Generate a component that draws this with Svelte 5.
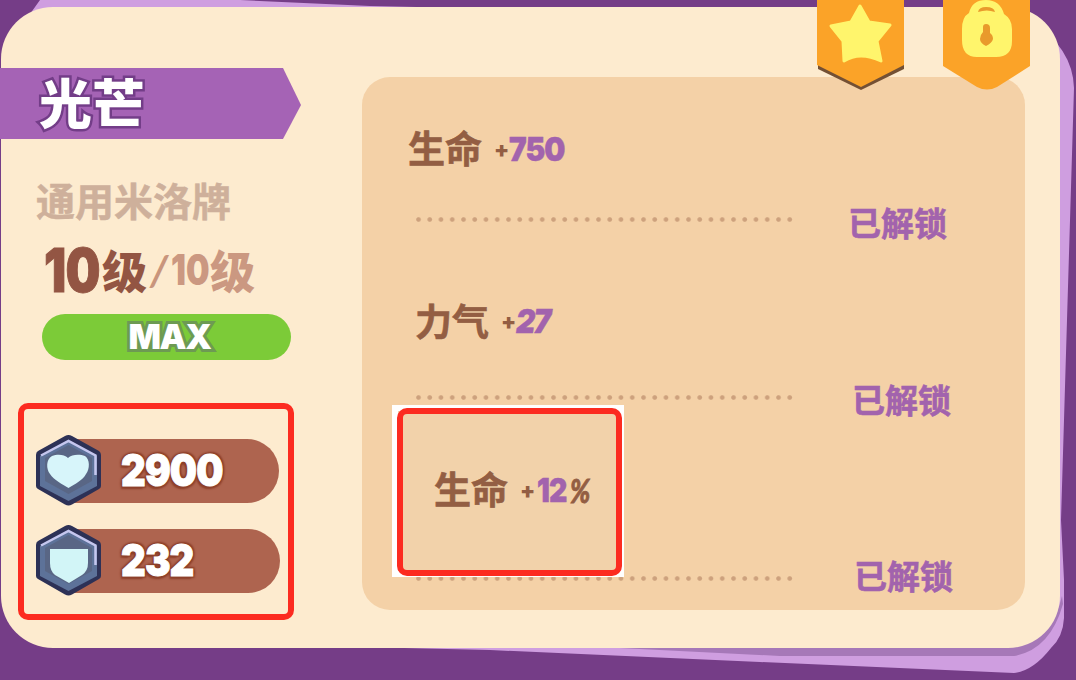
<script>
    const stats = [
        {icon: "heart", value: 2900, width: 210},
        {icon: "shield", value: 232, width: 211}
    ];

    const bonuses = [
        {name: "生命", value: "750", unit: "", style: "first"},
        {name: "力气", value: "27", unit: "", style: "second"},
        {name: "生命", value: "12", unit: "%", style: "third"}
    ];
</script>

<div class="screen">
    <svg class="backdrop" width="1076" height="680" viewBox="0 0 1076 680">
        <path fill="#cf9ee0" d="M20 28 L40 0 H240 L370 6 L1030 20 Q1073 48 1074 88 L1067 320 L1061 520 L1064 580 L1064 618 Q1063 637 1051 648 Q1033 671 1014 673 L760 662 L490 650 L60 640Z"/>
        <path fill="#a678b8" d="M560 645 H1010 Q1052 640 1062 596 L1063 604 Q1050 650 1014 656 H780Z"/>
    </svg>

    <main class="card">
        <section class="summary">
            <h1 class="ribbon"><span>光芒</span></h1>
            <p class="kind">通用米洛牌</p>

            <div class="level">
                <b class="now">10</b><span class="unit">级</span><i>/</i><b class="cap">10</b><span class="unit faded">级</span>
            </div>

            <div class="progress">MAX</div>

            <div class="stats">
                {#each stats as stat}
                    <div class="stat">
                        <svg width="67" height="72" viewBox="0 0 67 72">
                            <path fill="#2d3156" d="M30 1 Q33.5 -1 37 1 L64 16 Q66 17.500 66 20 V51 Q66 53 64 54 L37 69.500 Q33.5 71.500 30 69.500 L3 54 Q1 53 1 51 V20 Q1 17 3 16Z"/>
                            <path fill="#5d7299" d="M33.500 5 L62 21 V51 L33.500 66 L5 51 V21Z"/>
                            <path fill="#596685" d="M33.500 10 L57 23 V46 L33.500 59 L10 46 V23Z"/>
                            <path fill="none" stroke="#c5c7ef" stroke-width="2.500" d="M6 20.500 L33.500 6 L60.500 20.500 V40"/>
                            {#if stat.icon === "heart"}
                                <path fill="#d7f5fa" d="M33 23 C29 19 22 19 17 21 C11 24 11 34 15 39 C19 45 27 49 33.500 53 C40 49 48 45 51 39 C55 34 55 24 50 21 C45 19 37 19 33 23Z"/>
                            {:else}
                                <path fill="#d2f5f7" d="M15 24 H53 V38 Q53 46 47 50 L34 58 L20 50 Q15 46 15 38Z"/>
                            {/if}
                        </svg>
                        <div class="bar" style:width="{stat.width}px"><b>{stat.value}</b></div>
                    </div>
                {/each}
            </div>
        </section>

        <section class="bonuses">
            {#each bonuses as bonus}
                <div class="bonus {bonus.style}">
                    <div class="detail">
                        <div class="text">
                            <span class="name">{bonus.name}</span>
                            <span class="amount"><i>+</i><b>{bonus.value}</b>{#if bonus.unit}<em>{bonus.unit}</em>{/if}</span>
                        </div>
                        <div class="dots"></div>
                    </div>
                    <span class="state">已解锁</span>
                </div>
            {/each}
        </section>
    </main>

    <div class="badges">
        <svg width="88" height="92" viewBox="0 0 88 92">
            <path fill="#735034" d="M1 62 H87 V69 L44 90 L1 69Z"/>
            <path fill="#fba328" d="M0 0 H87 V65 L44 87 L0 65Z"/>
            <path fill="#fff56c" stroke="#fff56c" stroke-width="3" stroke-linejoin="round" d="M43 6 L52 22 L73 25 L60 41 L64 61 Q43 51 27 61 L26 41 L14 26 L34 22Z"/>
        </svg>
        <svg width="88" height="92" viewBox="0 0 88 92">
            <path fill="#fba328" d="M0 0 H87 V66 L54 87 Q44 92 34 87 L0 66Z"/>
            <path fill="#fff56c" d="M26 13 Q29 0 43 0 Q57 0 61 14 Q69 19 69 29 V41 Q69 57 53 57 H34 Q19 57 19 40 V29 Q19 17 26 13Z"/>
            <path fill="#e99a2c" d="M35 12 Q36 7 43 7 Q51 7 52 12 Q44 9 35 12Z M40 27 Q40 24 43 24 Q47 24 47 28 V33 Q50 35 50 39 Q49 43 43 46 Q37 43 37 39 Q37 35 40 32Z"/>
        </svg>
    </div>

    <div class="highlight"></div>
</div>

<style>
    :global(body){
        margin: 0;
    }

    .screen{
        position: relative;
        display: flow-root;
        width: 1076px;
        height: 680px;
        overflow: hidden;
        background: #753d87;
        font-family: "Noto Sans CJK SC", sans-serif;
    }

    .backdrop{
        position: absolute;
        top: 0;
        left: 0;
    }

    .card{
        position: relative;
        display: flex;
        width: 1059px;
        height: 641px;
        margin: 7px 0 0 1px;
        border-radius: 52px;
        background: #fdebcf;
    }

    .summary{
        width: 361px;
        flex: none;
    }

    .ribbon{
        display: flex;
        align-items: center;
        width: 301px;
        height: 71px;
        margin: 61px 0 0 -1px;
        background: #a563b5;
        clip-path: polygon(0 0, 283px 0, 100% 37px, 283px 100%, 0 100%);
    }

    .ribbon span{
        padding-left: 39px;
        color: white;
        font-size: 53px;
        font-weight: 900;
        line-height: 67px;
        height: 71px;
        -webkit-text-stroke: 5px #733d88;
        paint-order: stroke fill;
    }

    .kind{
        margin: 40px 0 0 35px;
        color: #ceb09b;
        font-size: 39px;
        font-weight: 700;
        line-height: 40px;
        -webkit-text-stroke: .5px;
    }

    .level{
        display: flex;
        align-items: center;
        height: 56px;
        margin: 23px 0 0 43px;
        color: #935543;
        font-size: 45px;
        font-weight: 900;
        line-height: 56px;
    }

    .level b, .progress, .bar, .amount{
        font-family: Inter, sans-serif;
        font-weight: 900;
    }

    .level .now{
        width: 58px;
        font-size: 60px;
        letter-spacing: -1px;
        transform: scaleX(.82);
        transform-origin: left;
        -webkit-text-stroke: 1px;
    }

    .level i{
        width: 24px;
        color: #c9957c;
        font-family: Lato, sans-serif;
        font-size: 42px;
        font-weight: 700;
        text-align: center;
    }

    .level .cap{
        width: 39px;
        color: #cb9881;
        font-size: 42px;
        transform: scaleX(.79);
        transform-origin: left;
    }

    .unit.faded{
        color: #cb9881;
    }

    .progress{
        width: 249px;
        height: 46px;
        margin: 16px 0 0 41px;
        border-radius: 23px;
        background: #7ccb38;
        color: white;
        font-size: 34px;
        line-height: 45px;
        letter-spacing: -1.5px;
        text-align: center;
        text-indent: 6px;
        -webkit-text-stroke: 6px #6d9a53;
        paint-order: stroke fill;
    }

    .stats{
        display: flex;
        flex-direction: column;
        gap: 18px;
        margin: 75px 0 0 34px;
    }

    .stat{
        display: flex;
        align-items: center;
        height: 72px;
    }

    .stat svg{
        position: relative;
        flex: none;
    }

    .bar{
        box-sizing: border-box;
        height: 64px;
        margin-left: -33px;
        padding-left: 52px;
        border-radius: 0 33px 33px 0;
        background: #ae644f;
        color: white;
        font-size: 44px;
        line-height: 63px;
        text-shadow: 0 0 3px #833820, 2px 2px 2px #8f422c, -2px -1px 2px #8f422c, 2px -2px 2px #8f422c, -2px 3px 2px #8f422c;
    }

    .bar b{
        display: inline-block;
        font-weight: 900;
        letter-spacing: -1px;
        transform: scaleX(.87);
        transform-origin: left;
        -webkit-text-stroke: 1px;
    }

    .bonuses{
        box-sizing: border-box;
        width: 663px;
        height: 533px;
        margin-top: 70px;
        border-radius: 28px;
        background: #f4d1a7;
    }

    .bonus{
        display: flex;
        align-items: flex-end;
        height: 178px;
    }

    .first{
        height: 146px;
    }

    .third{
        height: 181px;
    }

    .detail{
        display: flex;
        flex-direction: column;
        width: 434px;
        flex: none;
    }

    .text{
        display: flex;
        align-items: center;
        height: 40px;
        margin-bottom: 50px;
        padding-left: 46px;
        color: #935e43;
        font-size: 37px;
        font-weight: 700;
        line-height: 40px;
    }

    .name, .state{
        -webkit-text-stroke: .6px;
    }

    .second .text{
        margin-bottom: 55px;
        padding-left: 53px;
    }

    .third .text{
        position: relative;
        box-sizing: border-box;
        width: 232px;
        height: 172px;
        margin: 0 0 -1px 30px;
        padding: 0 0 7px 42px;
        background: #f2d2aa;
        box-shadow: inset 0 0 0 6px white;
    }

    /* red frame inside the white-edged cutout */
    .third .text::after{
        content: "";
        position: absolute;
        inset: 3px 2px 1px 5px;
        border: 6px solid #fc2b20;
        border-radius: 10px;
    }

    .amount{
        display: flex;
        margin: 4px 0 0 12px;
        font-size: 33px;
        line-height: 40px;
    }

    .amount i{
        width: 15px;
        font-size: 22px;
        font-style: normal;
    }

    .third .amount i{
        width: 17px;
    }

    .amount b{
        color: #a263ad;
        font-weight: 900;
        letter-spacing: -1px;
        transform: scaleX(.9);
        transform-origin: left;
        -webkit-text-stroke: .5px;
    }

    .second .amount{
        margin-top: 2px;
    }

    .second b{
        font-style: italic;
        letter-spacing: -2px;
    }

    .third .amount b{
        width: 33px;
        transform: scaleX(.86);
    }

    .amount em{
        font-family: Lato, sans-serif;
        font-size: 33px;
        transform: scaleX(.8);
        transform-origin: left;
        -webkit-text-stroke: .8px;
    }

    .dots{
        width: 377px;
        height: 5px;
        margin-left: 54px;
        margin-bottom: 1px;
        background: radial-gradient(circle at 2.5px 2.5px, #cda17d 1.8px, transparent 2.8px) 0 0 / 11.26px 5px;
    }

    .state{
        margin: 0 0 -19px 52px;
        color: #a263ad;
        font-size: 33px;
        font-weight: 700;
        line-height: 40px;
    }

    .second .state{
        margin-left: 56px;
        margin-bottom: -18px;
    }

    .third .state{
        margin-left: 58px;
        margin-bottom: -13px;
    }

    .badges{
        position: absolute;
        top: 0;
        left: 817px;
        display: flex;
        gap: 38px;
    }

    .highlight{
        position: absolute;
        top: 403px;
        left: 18px;
        box-sizing: border-box;
        width: 276px;
        height: 217px;
        border: 6px solid #fc2b20;
        border-radius: 10px;
    }
</style>
